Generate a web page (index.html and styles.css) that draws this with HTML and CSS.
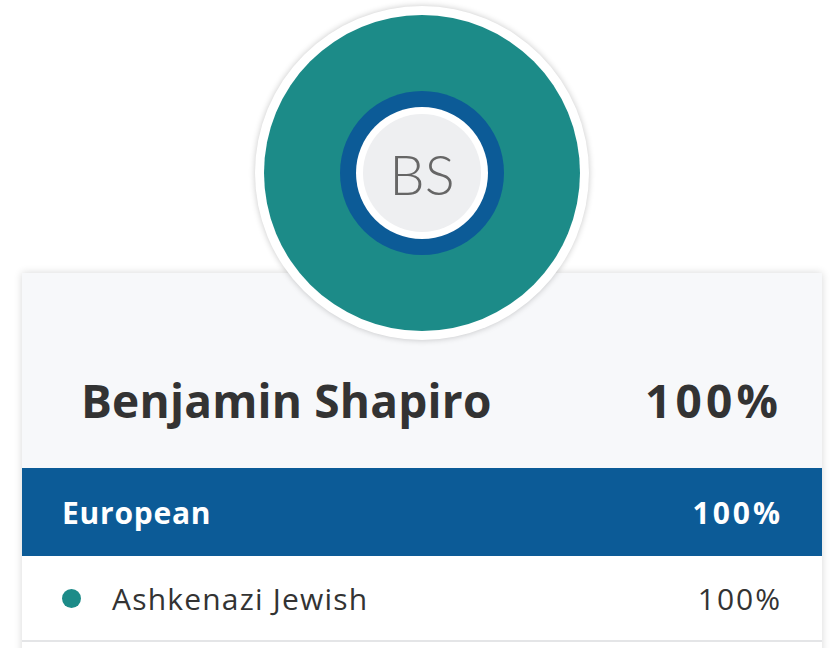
FILE: index.html
```html
<!DOCTYPE html>
<html>
<head>
<meta charset="utf-8">
<link rel="stylesheet" href="styles.css">
</head>
<body>
<div class="page">
  <div class="avatar">
    <div class="donut">
      <div class="ring">
        <div class="ring-gap">
          <div class="initials">BS</div>
        </div>
      </div>
    </div>
  </div>
  <div class="card">
    <div class="card-head">
      <span class="name">Benjamin Shapiro</span>
      <span class="total num">100%</span>
    </div>
    <div class="region">
      <span class="region-name">European</span>
      <span class="num">100%</span>
    </div>
    <div class="row">
      <span class="dot"></span>
      <span class="label">Ashkenazi Jewish</span>
      <span class="pct num">100%</span>
    </div>
  </div>
</div>
</body>
</html>
```

FILE: styles.css
```css
html, body {
  margin: 0;
  padding: 0;
  background: #ffffff;
  font-family: "Open Sans", Lato, sans-serif;
  color: #333333;
}
.page {
  width: 800px;
  padding: 6px 10px 0 22px;
}
.avatar {
  position: relative;
  z-index: 2;
  width: 334px;
  height: 334px;
  margin: 0 auto -67px;
  border-radius: 50%;
  background: #ffffff;
  box-shadow: 0 0 6px rgba(0, 0, 0, 0.22);
  display: flex;
  align-items: center;
  justify-content: center;
}
.donut {
  width: 316px;
  height: 316px;
  border-radius: 50%;
  background: #1c8b88;
  display: flex;
  align-items: center;
  justify-content: center;
}
.ring {
  width: 164px;
  height: 164px;
  border-radius: 50%;
  background: #0c5b97;
  display: flex;
  align-items: center;
  justify-content: center;
}
.ring-gap {
  width: 132px;
  height: 132px;
  border-radius: 50%;
  background: #ffffff;
  display: flex;
  align-items: center;
  justify-content: center;
}
.initials {
  width: 118px;
  height: 118px;
  border-radius: 50%;
  background: #eeeff1;
  color: #666666;
  font-family: Lato, sans-serif;
  font-weight: 300;
  font-size: 56px;
  display: flex;
  align-items: center;
  justify-content: center;
}
.card {
  position: relative;
  z-index: 1;
  background: #f7f8fa;
  box-shadow: 0 0 8px rgba(0, 0, 0, 0.16);
}
.card-head {
  height: 195px;
  box-sizing: border-box;
  padding: 0 44px 41px 59px;
  display: flex;
  align-items: flex-end;
  justify-content: space-between;
  font-weight: 700;
  font-size: 46px;
  line-height: 54px;
  color: #333333;
}
.name {
  letter-spacing: 0.2px;
}
.total {
  letter-spacing: 4.2px;
  margin-right: -4.2px;
}
.region {
  height: 88px;
  background: #0c5b97;
  color: #ffffff;
  font-weight: 700;
  font-size: 30px;
  display: flex;
  align-items: center;
  justify-content: space-between;
  padding: 0 42px 0 40px;
}
.region-name {
  letter-spacing: 0.75px;
}
.region .num {
  letter-spacing: 3px;
  margin-right: -3px;
}
.row {
  height: 84px;
  background: #ffffff;
  border-bottom: 2px solid #e4e5e7;
  display: flex;
  align-items: center;
  padding: 0 42px 0 40px;
  font-size: 30px;
  color: #333333;
}
.dot {
  width: 19px;
  height: 19px;
  border-radius: 50%;
  background: #1c8b88;
  margin-right: 31px;
}
.label {
  flex: 1;
  letter-spacing: 1.2px;
}
.pct {
  letter-spacing: 2px;
  margin-right: -2px;
}
.card::after {
  content: "";
  display: block;
  height: 20px;
  background: #ffffff;
}
```
